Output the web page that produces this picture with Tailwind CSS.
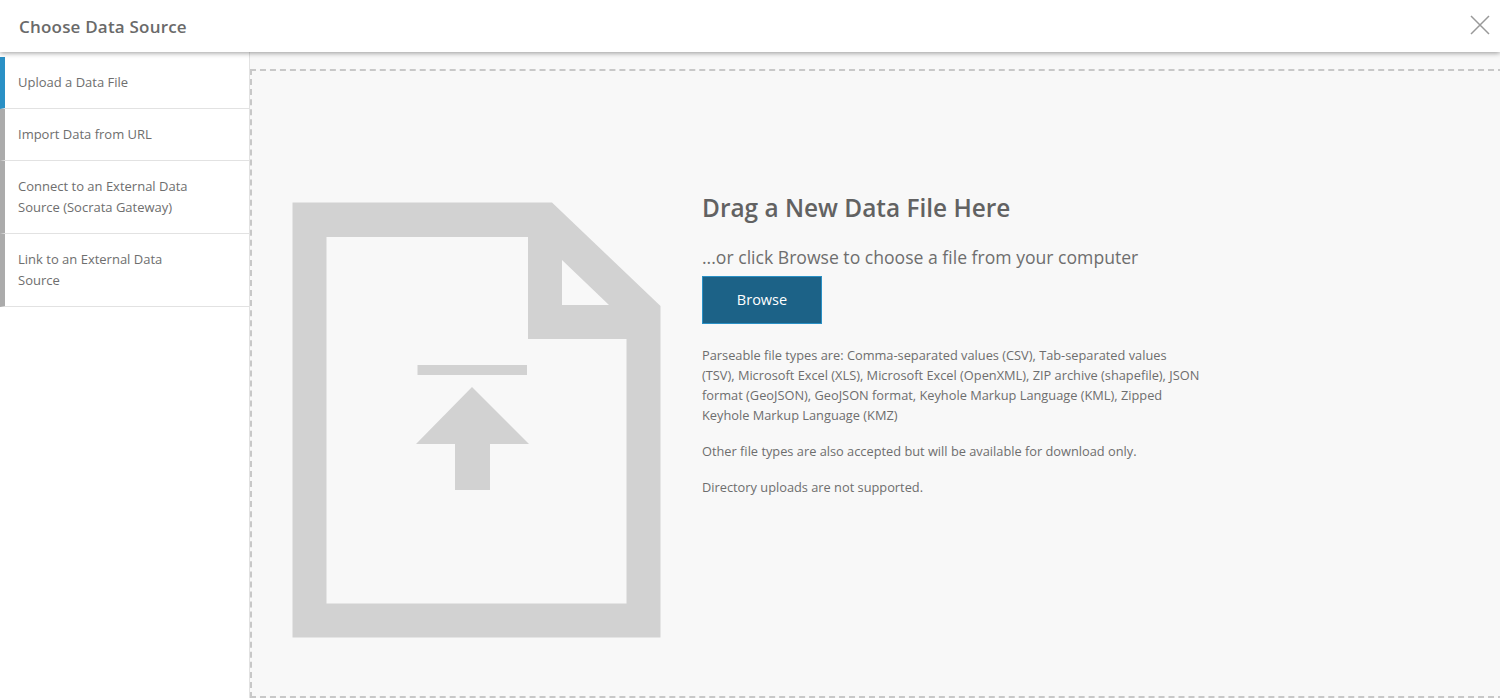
<!DOCTYPE html>
<html lang="en">
<head>
    <meta charset="UTF-8">
    <title>Choose Data Source</title>
    <script src="https://cdn.jsdelivr.net/npm/@tailwindcss/browser@4"></script>
</head>
<body class="bg-white font-['Open_Sans',sans-serif] overflow-hidden">
    <div class="h-[698px] w-[1500px] overflow-hidden relative">
        <!-- Header -->
        <header class="relative z-10 h-[52px] bg-white flex items-center justify-between pl-[19px] pr-[10px] pt-[2px] shadow-[0_1px_5px_rgba(0,0,0,0.4)]">
            <h1 class="text-[17px] font-semibold text-[#6a6a6a] tracking-[0.2px]">Choose Data Source</h1>
            <svg class="w-[20px] h-[20px] -mt-[5px]" viewBox="0 0 20 20" fill="none" stroke="#999999" stroke-width="1.5">
                <path d="M1 1 L19 19 M19 1 L1 19"></path>
            </svg>
        </header>

        <div class="flex h-[646px]">
            <!-- Sidebar -->
            <nav class="w-[250px] shrink-0 bg-white border-r border-[#e2e2e2] pt-[5px] text-[13px] leading-[21px] text-[#6e6e6e]">
                <a class="flex items-center h-[52px] border-l-[5px] border-l-[#2a90c5] border-b border-b-[#e2e2e2] pl-[13px] pr-[50px]">Upload a Data File</a>
                <a class="flex items-center h-[52px] border-l-[5px] border-l-[#ababab] border-b border-b-[#e2e2e2] pl-[13px] pr-[50px]">Import Data from URL</a>
                <a class="flex items-center h-[73px] border-l-[5px] border-l-[#ababab] border-b border-b-[#e2e2e2] pl-[13px] pr-[50px]">Connect to an External Data Source (Socrata Gateway)</a>
                <a class="flex items-center h-[73px] border-l-[5px] border-l-[#ababab] border-b border-b-[#e2e2e2] pl-[13px] pr-[60px]">Link to an External Data Source</a>
            </nav>

            <!-- Drop area -->
            <main class="flex-1 bg-[#f8f8f8] pt-[17px]">
                <div class="h-[629px] w-[1254px] border-2 border-dashed border-[#c8c8c8] flex pl-[40px] pt-[131px]">
                    <svg class="w-[369px] h-[436px] shrink-0" viewBox="292 202 369 436">
                        <path fill="#d2d2d2" fill-rule="evenodd" d="M292.5 202.5 H552 L660.5 306 V637.5 H292.5 Z M326.5 237 V603.5 H626.5 V339 H528 V237 Z M562 260 V305 H609 Z"></path>
                        <path fill="#d2d2d2" d="M417.5 365 H527 V375 H417.5 Z M472 387 L529 444 H490 V490 H455 V444 H416 Z"></path>
                    </svg>
                    <div class="w-[500px] ml-[41px] text-[#626262]">
                        <h2 class="text-[24.4px] leading-[34px] font-semibold -mt-[11px]">Drag a New Data File Here</h2>
                        <p class="text-[17.6px] leading-[25px] mt-[20px] text-[#6e6e6e]">...or click Browse to choose a file from your computer</p>
                        <button class="flex items-center justify-center w-[120px] h-[48px] mt-[6px] bg-[#1c6287] border border-[#2a90c5] text-white text-[14.5px] font-medium">Browse</button>
                        <p class="text-[12.8px] leading-[20px] mt-[21px] text-[#6e6e6e]">Parseable file types are: Comma-separated values (CSV), Tab-separated values (TSV), Microsoft Excel (XLS), Microsoft Excel (OpenXML), ZIP archive (shapefile), JSON format (GeoJSON), GeoJSON format, Keyhole Markup Language (KML), Zipped Keyhole Markup Language (KMZ)</p>
                        <p class="text-[12.8px] leading-[20px] mt-[16px] text-[#6e6e6e]">Other file types are also accepted but will be available for download only.</p>
                        <p class="text-[12.8px] leading-[20px] mt-[16px] text-[#6e6e6e]">Directory uploads are not supported.</p>
                    </div>
                </div>
            </main>
        </div>
    </div>
</body>
</html>
